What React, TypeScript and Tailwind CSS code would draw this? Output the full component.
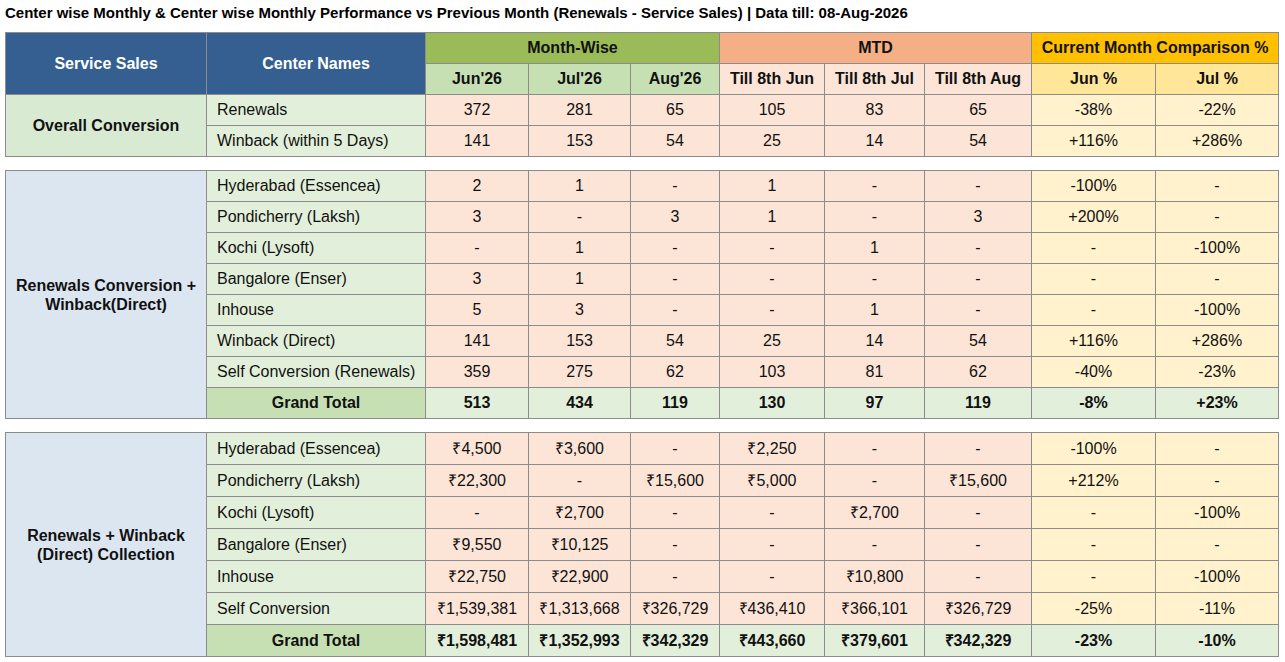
import React from "react";

const B = "border border-[#8c8c8c]";

function Cols() {
  return (
    <colgroup>
      <col className="w-[201px]" />
      <col className="w-[219px]" />
      <col className="w-[103px]" />
      <col className="w-[102px]" />
      <col className="w-[89px]" />
      <col className="w-[105px]" />
      <col className="w-[100px]" />
      <col className="w-[107px]" />
      <col className="w-[124px]" />
      <col className="w-[123px]" />
    </colgroup>
  );
}

type Row = { name: string; v: string[]; total?: boolean };

function DataRows({ rows, h, label, labelBg }: { rows: Row[]; h: string; label: React.ReactNode; labelBg: string }) {
  return (
    <>
      {rows.map((r, i) => (
        <tr key={i} className={h}>
          {i === 0 && (
            <td rowSpan={rows.length} className={`${B} ${labelBg} text-center font-bold px-2 leading-[19px]`}>
              {label}
            </td>
          )}
          <td className={`${B} ${r.total ? "bg-[#c6e0b4] text-center font-bold" : "bg-[#e2efda] pl-[10px]"}`}>
            {r.name}
          </td>
          {r.v.map((x, j) => {
            let bg = j < 6 ? "bg-[#fce4d6]" : "bg-[#fff2cc]";
            if (r.total) bg = "bg-[#e2efda]";
            return (
              <td key={j} className={`${B} ${bg} text-center ${r.total ? "font-bold" : ""}`}>
                {x}
              </td>
            );
          })}
        </tr>
      ))}
    </>
  );
}

export default function App() {
  const t1: Row[] = [
    { name: "Renewals", v: ["372", "281", "65", "105", "83", "65", "-38%", "-22%"] },
    { name: "Winback (within 5 Days)", v: ["141", "153", "54", "25", "14", "54", "+116%", "+286%"] },
  ];
  const t2: Row[] = [
    { name: "Hyderabad (Essencea)", v: ["2", "1", "-", "1", "-", "-", "-100%", "-"] },
    { name: "Pondicherry (Laksh)", v: ["3", "-", "3", "1", "-", "3", "+200%", "-"] },
    { name: "Kochi (Lysoft)", v: ["-", "1", "-", "-", "1", "-", "-", "-100%"] },
    { name: "Bangalore (Enser)", v: ["3", "1", "-", "-", "-", "-", "-", "-"] },
    { name: "Inhouse", v: ["5", "3", "-", "-", "1", "-", "-", "-100%"] },
    { name: "Winback (Direct)", v: ["141", "153", "54", "25", "14", "54", "+116%", "+286%"] },
    { name: "Self Conversion (Renewals)", v: ["359", "275", "62", "103", "81", "62", "-40%", "-23%"] },
    { name: "Grand Total", v: ["513", "434", "119", "130", "97", "119", "-8%", "+23%"], total: true },
  ];
  const t3: Row[] = [
    { name: "Hyderabad (Essencea)", v: ["₹4,500", "₹3,600", "-", "₹2,250", "-", "-", "-100%", "-"] },
    { name: "Pondicherry (Laksh)", v: ["₹22,300", "-", "₹15,600", "₹5,000", "-", "₹15,600", "+212%", "-"] },
    { name: "Kochi (Lysoft)", v: ["-", "₹2,700", "-", "-", "₹2,700", "-", "-", "-100%"] },
    { name: "Bangalore (Enser)", v: ["₹9,550", "₹10,125", "-", "-", "-", "-", "-", "-"] },
    { name: "Inhouse", v: ["₹22,750", "₹22,900", "-", "-", "₹10,800", "-", "-", "-100%"] },
    { name: "Self Conversion", v: ["₹1,539,381", "₹1,313,668", "₹326,729", "₹436,410", "₹366,101", "₹326,729", "-25%", "-11%"] },
    { name: "Grand Total", v: ["₹1,598,481", "₹1,352,993", "₹342,329", "₹443,660", "₹379,601", "₹342,329", "-23%", "-10%"], total: true },
  ];

  return (
    <div className="bg-white w-[1285px] h-[662px] overflow-hidden text-[16px] text-[#111] font-['Liberation_Sans',Arial,sans-serif]">
      <div className="pl-[5px] pt-[4px] h-[32px] text-[15px] font-bold leading-[18px] text-black">
        Center wise Monthly &amp; Center wise Monthly Performance vs Previous Month (Renewals - Service Sales) | Data till: 08-Aug-2026
      </div>
      <div className="pl-[5px] flex flex-col gap-[13px]">
        <table className="table-fixed border-collapse w-[1274px]">
          <Cols />
          <tbody>
            <tr className="h-[31px]">
              <td rowSpan={2} className={`${B} bg-[#355f91] text-white font-bold text-center`}>
                Service Sales
              </td>
              <td rowSpan={2} className={`${B} bg-[#355f91] text-white font-bold text-center`}>
                Center Names
              </td>
              <td colSpan={3} className={`${B} bg-[#9bbb59] font-bold text-center`}>
                Month-Wise
              </td>
              <td colSpan={3} className={`${B} bg-[#f4b084] font-bold text-center`}>
                MTD
              </td>
              <td colSpan={2} className={`${B} bg-[#ffc000] font-bold text-center`}>
                Current Month Comparison %
              </td>
            </tr>
            <tr className="h-[31px]">
              {["Jun'26", "Jul'26", "Aug'26"].map((x) => (
                <td key={x} className={`${B} bg-[#c6e0b4] font-bold text-center`}>
                  {x}
                </td>
              ))}
              {["Till 8th Jun", "Till 8th Jul", "Till 8th Aug"].map((x) => (
                <td key={x} className={`${B} bg-[#fce4d6] font-bold text-center`}>
                  {x}
                </td>
              ))}
              {["Jun %", "Jul %"].map((x) => (
                <td key={x} className={`${B} bg-[#ffe699] font-bold text-center`}>
                  {x}
                </td>
              ))}
            </tr>
            <DataRows rows={t1} h="h-[31px]" label="Overall Conversion" labelBg="bg-[#d9ead3]" />
          </tbody>
        </table>
        <table className="table-fixed border-collapse w-[1274px]">
          <Cols />
          <tbody>
            <DataRows
              rows={t2}
              h="h-[31px]"
              label={
                <>
                  Renewals Conversion +<br />
                  Winback(Direct)
                </>
              }
              labelBg="bg-[#dce6f1]"
            />
          </tbody>
        </table>
        <table className="table-fixed border-collapse w-[1274px]">
          <Cols />
          <tbody>
            <DataRows
              rows={t3}
              h="h-[32px]"
              label={
                <>
                  Renewals + Winback
                  <br />
                  (Direct) Collection
                </>
              }
              labelBg="bg-[#dce6f1]"
            />
          </tbody>
        </table>
      </div>
    </div>
  );
}
